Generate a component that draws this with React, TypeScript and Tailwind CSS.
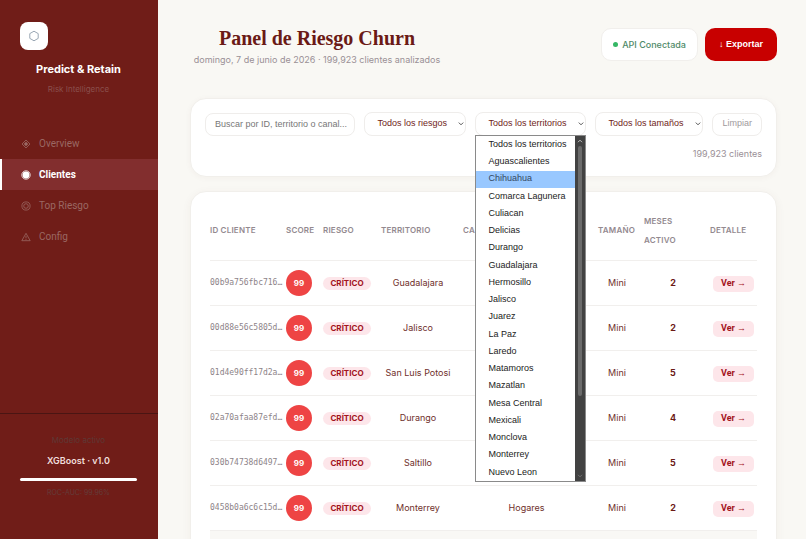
import type { ReactNode } from 'react';

interface Client {
  id: string;
  score: number;
  territory: string;
  channel?: string;
  size: string;
  months: number;
}

interface NavItem {
  label: string;
  icon: ReactNode;
  active?: boolean;
}

const clients: Client[] = [
  { id: '00b9a756fbc716…', score: 99, territory: 'Guadalajara', size: 'Mini', months: 2 },
  { id: '00d88e56c5805d…', score: 99, territory: 'Jalisco', size: 'Mini', months: 2 },
  { id: '01d4e90ff17d2a…', score: 99, territory: 'San Luis Potosi', size: 'Mini', months: 5 },
  { id: '02a70afaa87efd…', score: 99, territory: 'Durango', size: 'Mini', months: 4 },
  { id: '030b74738d6497…', score: 99, territory: 'Saltillo', size: 'Mini', months: 5 },
  { id: '0458b0a6c6c15d…', score: 99, territory: 'Monterrey', channel: 'Hogares', size: 'Mini', months: 2 },
];

const territories = [
  'Todos los territorios',
  'Aguascalientes',
  'Chihuahua',
  'Comarca Lagunera',
  'Culiacan',
  'Delicias',
  'Durango',
  'Guadalajara',
  'Hermosillo',
  'Jalisco',
  'Juarez',
  'La Paz',
  'Laredo',
  'Matamoros',
  'Mazatlan',
  'Mesa Central',
  'Mexicali',
  'Monclova',
  'Monterrey',
  'Nuevo Leon',
];

const navItems: NavItem[] = [
  {
    label: 'Overview',
    icon: (
      <>
        <path d="M5 1 9 5 5 9 1 5Z" fill="none" stroke="currentColor" strokeWidth="0.8" />
        <path d="M5 2.8 7.2 5 5 7.2 2.8 5Z" fill="currentColor" />
      </>
    ),
  },
  {
    label: 'Clientes',
    active: true,
    icon: (
      <>
        <circle cx="5" cy="5" r="4.2" fill="none" stroke="currentColor" strokeWidth="0.8" />
        <circle cx="5" cy="5" r="3.4" fill="currentColor" />
      </>
    ),
  },
  {
    label: 'Top Riesgo',
    icon: (
      <>
        <circle cx="5" cy="5" r="4.1" fill="none" stroke="currentColor" strokeWidth="0.8" />
        <circle cx="5" cy="5" r="2.3" fill="none" stroke="currentColor" strokeWidth="0.8" />
      </>
    ),
  },
  {
    label: 'Config',
    icon: (
      <>
        <path d="M5 1.3 9.2 8.7H0.8Z" fill="none" stroke="currentColor" strokeWidth="0.8" />
        <path d="M5 3.8V6.3M5 7V7.8" stroke="currentColor" strokeWidth="0.8" />
      </>
    ),
  },
];

function Sidebar() {
  return (
    <aside className="flex w-[158px] shrink-0 flex-col bg-[#701d18]">
      <div className="pt-[22px] pr-[21px] pl-5 text-center">
        <div className="flex size-7 items-center justify-center rounded-lg bg-white">
          <svg viewBox="0 0 12 12" className="size-3 text-[#8f9dab]" aria-hidden="true">
            <path d="M6 1.2 10.2 3.6V8.4L6 10.8 1.8 8.4V3.6Z" fill="none" stroke="currentColor" strokeWidth="0.9" />
          </svg>
        </div>
        <p className="mt-2 text-[11px] leading-[22px] font-bold whitespace-nowrap text-white">Predict &amp; Retain</p>
        <p className="mt-[2px] text-[8px] leading-[14px] text-[#8a4f4c]">Risk Intelligence</p>
      </div>

      <nav className="mt-8 flex flex-1 flex-col">
        {navItems.map((item) => (
          <a
            key={item.label}
            href="#"
            className={`flex h-[31px] items-center gap-2 border-l-2 pl-[19px] font-[Roboto,sans-serif] text-[10px] ${
              item.active ? 'border-white bg-[#822e2e] font-bold text-white' : 'border-transparent text-[#9a6863]'
            }`}
          >
            <svg viewBox="0 0 10 10" className="size-[10px]" aria-hidden="true">
              {item.icon}
            </svg>
            {item.label}
          </a>
        ))}
      </nav>

      <div className="h-[126px] border-t border-[#4a1513] pt-[17px] pr-[21px] pl-5 text-center">
        <p className="text-[8px] leading-[18px] text-[#5e3835]">Modelo activo</p>
        <p className="mt-[3px] text-[9px] leading-[18px] font-semibold text-[#f0dfdd]">XGBoost · v1.0</p>
        <div className="mt-2 h-[3px] rounded-full bg-white" />
        <p className="mt-[3px] text-[7px] leading-[18px] text-[#643c39]">ROC-AUC: 99.96%</p>
      </div>
    </aside>
  );
}

function Header() {
  return (
    <header className="flex items-start justify-between">
      <div className="w-[254px] text-center">
        <h1 className="font-[Liberation_Serif,serif] text-[20px] leading-6 font-bold text-[#6b1a16]">
          Panel de Riesgo Churn
        </h1>
        <p className="text-[9px] leading-5 whitespace-nowrap text-[#9a9096]">
          domingo, 7 de junio de 2026 · 199,923 clientes analizados
        </p>
      </div>
      <div className="mt-[2px] flex items-center gap-[7px]">
        <span className="flex h-[33px] items-center gap-1 rounded-[10px] border border-[#f1efec] bg-white px-[11px] text-[9px] font-medium text-[#4f8a68]">
          <span className="size-[5px] rounded-full bg-[#35b765]" />
          API Conectada
        </span>
        <button
          type="button"
          className="flex h-[33px] items-center rounded-[10px] bg-[#c80000] px-[14px] font-[Liberation_Sans,Arial,sans-serif] text-[9px] font-bold text-white"
        >
          ↓ Exportar
        </button>
      </div>
    </header>
  );
}

interface FilterSelectProps {
  label: string;
  placeholder: string;
  options?: string[];
  className: string;
  children?: ReactNode;
}

function FilterSelect({ label, placeholder, options = [], className, children }: FilterSelectProps) {
  return (
    <div className={`relative shrink-0 ${className}`}>
      <select
        aria-label={label}
        className="block h-6 w-full appearance-none rounded-lg border border-[#efedeb] bg-white pl-3 text-[#6f2420] outline-none"
      >
        <option>{placeholder}</option>
        {options.map((option) => (
          <option key={option}>{option}</option>
        ))}
      </select>
      <svg
        viewBox="0 0 6 4"
        className="pointer-events-none absolute top-[10px] right-[2px] h-1 w-[6px] text-[#444]"
        aria-hidden="true"
      >
        <path d="M0.8 0.6 3 2.8 5.2 0.6" fill="none" stroke="currentColor" strokeWidth="0.9" />
      </svg>
      {children}
    </div>
  );
}

function TerritoryMenu() {
  return (
    <div className="absolute top-[23px] left-0 z-10 flex h-[347px] w-full border border-[#8a8a8a] bg-white">
      <ul role="listbox" aria-label="Territorios" className="flex flex-1 flex-col text-[#222]">
        {territories.map((territory) => (
          <li
            key={territory}
            role="option"
            aria-selected={territory === 'Chihuahua'}
            className={`flex flex-1 items-center pl-3 whitespace-nowrap ${
              territory === 'Chihuahua' ? 'bg-[#99c8ff] text-[#33475f]' : ''
            }`}
          >
            {territory}
          </li>
        ))}
      </ul>
      {/* Scrollbar */}
      <div className="flex w-[10px] shrink-0 flex-col items-center bg-[#424242] py-[3px]">
        <svg viewBox="0 0 6 4" className="h-1 w-[6px] text-[#cfcfcf]" aria-hidden="true">
          <path d="M1 3.2 3 1.2 5 3.2" fill="none" stroke="currentColor" strokeWidth="0.9" />
        </svg>
        <div className="mt-[3px] h-[250px] w-1 rounded-full bg-[#6b6b6b]" />
        <svg viewBox="0 0 6 4" className="mt-auto h-1 w-[6px] text-[#777]" aria-hidden="true">
          <path d="M1 0.8 3 2.8 5 0.8" fill="none" stroke="currentColor" strokeWidth="0.9" />
        </svg>
      </div>
    </div>
  );
}

function Filters() {
  return (
    <section className="mt-[28px] rounded-2xl border border-[#f1efeb] bg-white px-[14px] pt-[13px] pb-3 shadow-[0_1px_6px_rgba(90,60,30,0.04)]">
      <div className="flex items-center gap-[9px] font-[Liberation_Sans,Arial,sans-serif] text-[9px]">
        <input
          type="text"
          aria-label="Buscar"
          placeholder="Buscar por ID, territorio o canal..."
          className="h-[23px] min-w-0 flex-1 rounded-lg border border-[#efedeb] bg-white pr-1 pl-[9px] outline-none placeholder:text-[#777]"
        />
        <FilterSelect label="Riesgo" placeholder="Todos los riesgos" className="w-[102px]" />
        <FilterSelect
          label="Territorio"
          placeholder="Todos los territorios"
          options={territories.slice(1)}
          className="w-[111px]"
        >
          <TerritoryMenu />
        </FilterSelect>
        <FilterSelect label="Tamaño" placeholder="Todos los tamaños" className="w-[108px]" />
        <button type="button" className="h-[23px] rounded-lg border border-[#efedeb] px-[9px] text-[#a09a9d]">
          Limpiar
        </button>
      </div>
      <p className="mt-2 text-right text-[9px] leading-5 text-[#9a9096]">199,923 clientes</p>
    </section>
  );
}

function ClientRow({ client }: { client: Client }) {
  return (
    <tr className="h-[45px] border-b border-[#f1efed] text-center text-[9px] text-[#6f2f2b]">
      <td className="text-left font-[DejaVu_Sans_Mono,monospace] text-[8px] text-[#8d8388]">
        <span className="block w-[68px] whitespace-nowrap">{client.id}</span>
      </td>
      <td>
        <span className="flex size-[26px] items-center justify-center rounded-full bg-[#ee4444] text-[8px] font-bold text-white">
          {client.score}
        </span>
      </td>
      <td>
        <span className="mt-px flex h-[13px] w-12 items-center justify-center rounded-full bg-[#fde6ea] text-[8px] font-bold text-[#a3141c]">
          CRÍTICO
        </span>
      </td>
      <td className="pr-2 whitespace-nowrap">{client.territory}</td>
      <td className="pr-2">{client.channel}</td>
      <td className="pr-2">{client.size}</td>
      <td className="pr-2 font-bold text-[#6b1a16]">{client.months}</td>
      <td>
        <button
          type="button"
          className="mt-[2px] h-4 rounded-[5px] bg-[#fde6ea] px-2 font-[Roboto,sans-serif] text-[9px] font-bold whitespace-nowrap text-[#a3141c]"
        >
          Ver →
        </button>
      </td>
    </tr>
  );
}

function ClientTable() {
  return (
    <section className="mt-[14px] rounded-2xl border border-[#f1efeb] bg-white px-[19px] pb-5 shadow-[0_2px_10px_rgba(90,60,30,0.05)]">
      <table className="w-full table-fixed border-collapse">
        <colgroup>
          <col className="w-[76px]" />
          <col className="w-[37px]" />
          <col className="w-[58px]" />
          <col className="w-[82px]" />
          <col />
          <col className="w-[46px]" />
          <col className="w-[66px]" />
          <col className="w-[47px]" />
        </colgroup>
        <thead>
          <tr className="h-[68px] border-b border-[#f1efed] text-left text-[8px] leading-[19px] text-[#93898f] *:pt-[10px] *:font-semibold *:tracking-wide">
            <th>ID CLIENTE</th>
            <th>SCORE</th>
            <th>RIESGO</th>
            <th>TERRITORIO</th>
            <th>CANAL</th>
            <th>TAMAÑO</th>
            <th>
              <span className="block w-10">MESES ACTIVO</span>
            </th>
            <th>DETALLE</th>
          </tr>
        </thead>
        <tbody>
          {clients.map((client) => (
            <ClientRow key={client.id} client={client} />
          ))}
          {/* Hovered row */}
          <tr className="h-[45px] bg-[#f9f8f5]">
            <td colSpan={8} />
          </tr>
        </tbody>
      </table>
    </section>
  );
}

export default function App() {
  return (
    <div className="flex h-screen overflow-hidden bg-[#f9f8f4] font-[Inter,sans-serif]">
      <Sidebar />
      <main className="min-w-0 flex-1 overflow-hidden pt-[26px] pr-[29px] pl-8">
        <Header />
        <Filters />
        <ClientTable />
      </main>
    </div>
  );
}
